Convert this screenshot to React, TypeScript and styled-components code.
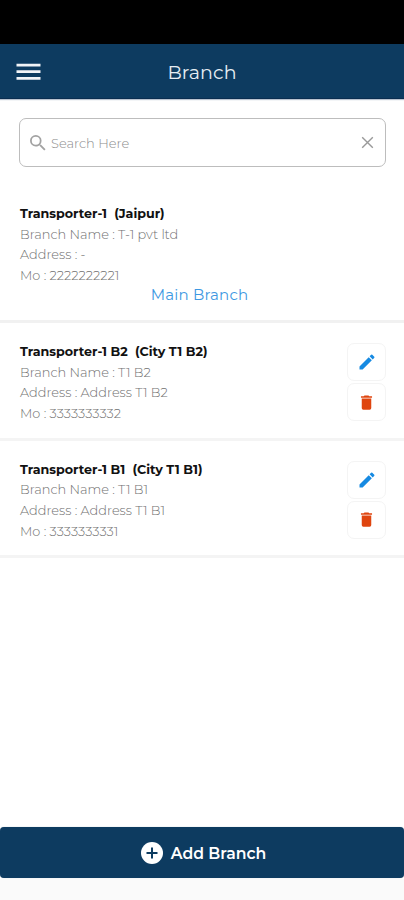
import React from "react";
import styled, { createGlobalStyle } from "styled-components";

const GlobalStyle = createGlobalStyle`
  * { box-sizing: border-box; }
  body { margin: 0; background: #fff; font-family: Montserrat, Inter, sans-serif; }
`;

const Screen = styled.div`
  width: 100%;
  height: 900px;
  display: flex;
  flex-direction: column;
  overflow: hidden;
  background: #fff;
`;

const StatusBar = styled.div`
  height: 44px;
  flex: none;
  background: #000;
`;

const Header = styled.header`
  height: 55px;
  flex: none;
  display: grid;
  grid-template-columns: 60px 1fr 60px;
  align-items: center;
  background: #0d3b60;
  border-bottom: 1px solid #092d50;
  box-shadow: 0 1px 1px #b9c3d0;
`;

const MenuButton = styled.button`
  display: flex;
  padding: 2px 0 0 16px;
  border: 0;
  background: none;
`;

const Title = styled.h1`
  margin: 3px 0 0;
  text-align: center;
  font-size: 19px;
  line-height: 24px;
  font-weight: 400;
  letter-spacing: 0.1px;
  color: #e6edf3;
`;

const SearchField = styled.label`
  flex: none;
  height: 49px;
  margin: 19px 18px 0 19px;
  padding: 0 11px 0 10px;
  display: flex;
  align-items: center;
  gap: 5px;
  border: 1px solid #bdbdbd;
  border-radius: 7px;
`;

const SearchInput = styled.input`
  flex: 1;
  min-width: 0;
  padding: 0;
  border: 0;
  outline: 0;
  background: none;
  font: 300 13px Montserrat, Inter, sans-serif;
  color: #888;
  &::placeholder { color: #8c8c8c; opacity: 1; }
`;

const List = styled.main`
  flex: 1;
  padding-top: 18px;
`;

const Row = styled.article<{ $main?: boolean }>`
  height: ${(p) => (p.$main ? 138 : 117.5)}px;
  display: flex;
  justify-content: space-between;
  padding: 19px 18px 0 20px;
  border-bottom: 3px solid ${(p) => (p.$main ? "#f1f1f1" : "#f4f4f4")};
`;

const Details = styled.div`
  flex: 1;
  display: flex;
  flex-direction: column;
`;

const Line = styled.span`
  height: 20.7px;
  line-height: 20.7px;
  white-space: pre;
  font-size: 12.9px;
  font-weight: 300;
  color: #707070;
`;

const Name = styled(Line)`
  font-size: 12.7px;
  font-weight: 700;
  color: #111;
`;

const MainBranch = styled.span`
  align-self: center;
  margin: -2px 0 0 -7px;
  line-height: 20px;
  font-size: 15px;
  letter-spacing: 0.2px;
  color: #3d98e2;
`;

const Actions = styled.div`
  display: flex;
  flex-direction: column;
  gap: 2px;
  padding-top: 1px;
`;

const IconButton = styled.button`
  width: 39px;
  height: 38px;
  padding: 0;
  display: flex;
  align-items: center;
  justify-content: center;
  border: 1px solid #f4f4f4;
  border-radius: 7px;
  background: #fff;
`;

const AddButton = styled.button`
  flex: none;
  height: 51px;
  margin-bottom: 1px;
  padding: 1px 0 0 3px;
  display: flex;
  align-items: center;
  justify-content: center;
  gap: 8px;
  border: 0;
  border-radius: 4px;
  background: #0d3b60;
  box-shadow: 0 0 1px #9aabba;
  font: 600 15.7px Montserrat, Inter, sans-serif;
  color: #fff;
`;

const BottomInset = styled.div`
  flex: none;
  height: 21px;
  background: #fafafa;
`;

interface Branch {
  name: string;
  lines: string[];
  main?: boolean;
}

const branches: Branch[] = [
  {
    name: "Transporter-1  (Jaipur)",
    lines: ["Branch Name : T-1 pvt ltd", "Address : -", "Mo : 2222222221"],
    main: true,
  },
  {
    name: "Transporter-1 B2  (City T1 B2)",
    lines: ["Branch Name : T1 B2", "Address : Address T1 B2", "Mo : 3333333332"],
  },
  {
    name: "Transporter-1 B1  (City T1 B1)",
    lines: ["Branch Name : T1 B1", "Address : Address T1 B1", "Mo : 3333333331"],
  },
];

const MenuIcon = () => (
  <svg width="25" height="18" viewBox="0 0 25 18" fill="#f1f4f7">
    <path d="M.5.7h24v2.8H.5zM.5 7.3h24v2.8H.5zM.5 13.9h24v2.8H.5z" />
  </svg>
);

const SearchIcon = () => (
  <svg width="16" height="16" viewBox="3 3 18 18" fill="#a2a2a2">
    <path d="M15.5 14h-.79l-.28-.27A6.47 6.47 0 0 0 16 9.5 6.5 6.5 0 1 0 9.5 16c1.61 0 3.09-.59 4.23-1.57l.27.28v.79l5 4.99L20.49 19zm-6 0a4.5 4.5 0 1 1 0-9 4.5 4.5 0 0 1 0 9z" />
  </svg>
);

const ClearIcon = () => (
  <svg width="13" height="13" viewBox="0 0 13 13" stroke="#999" strokeWidth="1.4">
    <path d="m1.2 1.2 10.6 10.6M11.8 1.2 1.2 11.8" />
  </svg>
);

const EditIcon = () => (
  <svg width="20" height="20" viewBox="0 0 24 24" fill="#168ae2">
    <path d="M3 17.25V21h3.75L17.81 9.94l-3.75-3.75zM20.71 7.04a1 1 0 0 0 0-1.41l-2.34-2.34a1 1 0 0 0-1.41 0l-1.83 1.83 3.75 3.75z" />
  </svg>
);

const DeleteIcon = () => (
  <svg width="19" height="19" viewBox="0 0 24 24" fill="#df450f">
    <path d="M6 19a2 2 0 0 0 2 2h8a2 2 0 0 0 2-2V7H6zM19 4h-3.5l-1-1h-5l-1 1H5v2h14z" />
  </svg>
);

const AddIcon = () => (
  <svg width="22" height="22" viewBox="0 0 22 22">
    <circle cx="11" cy="11" r="11" fill="#fff" />
    <path d="M11 5.5v11M5.5 11h11" stroke="#0d3b60" strokeWidth="2" />
  </svg>
);

const BranchRow = ({ name, lines, main }: Branch) => (
  <Row $main={main}>
    <Details>
      <Name>{name}</Name>
      {lines.map((text) => (
        <Line key={text}>{text}</Line>
      ))}
      {main && <MainBranch>Main Branch</MainBranch>}
    </Details>
    {!main && (
      <Actions>
        <IconButton aria-label="Edit branch"><EditIcon /></IconButton>
        <IconButton aria-label="Delete branch"><DeleteIcon /></IconButton>
      </Actions>
    )}
  </Row>
);

export default function App() {
  return (
    <Screen>
      <GlobalStyle />
      <StatusBar />
      <Header>
        <MenuButton aria-label="Menu"><MenuIcon /></MenuButton>
        <Title>Branch</Title>
      </Header>
      <SearchField>
        <SearchIcon />
        <SearchInput placeholder="Search Here" />
        <ClearIcon />
      </SearchField>
      <List>
        {branches.map((branch) => (
          <BranchRow key={branch.name} {...branch} />
        ))}
      </List>
      <AddButton><AddIcon />Add Branch</AddButton>
      <BottomInset />
    </Screen>
  );
}
